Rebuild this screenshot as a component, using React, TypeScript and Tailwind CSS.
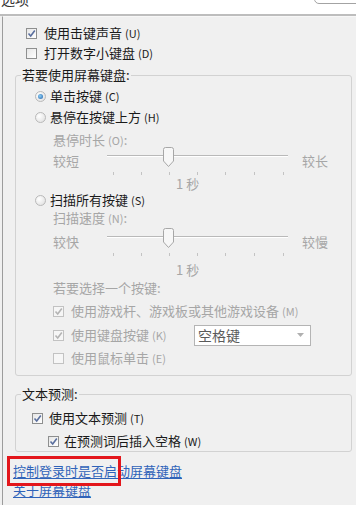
import React from "react";

const ink = "text-[#1a1a1a]";
const dim = "text-[#a6a6a6]";

function Check({ checked, disabled }: { checked?: boolean; disabled?: boolean }) {
  return (
    <span
      className={[
        "flex h-[11px] w-[11px] shrink-0 items-center justify-center border",
        disabled
          ? "border-[#c2c2c2] bg-[#f6f6f6]"
          : "border-[#8e8f8f] bg-[linear-gradient(135deg,#e6e6e6,#ffffff)]",
      ].join(" ")}
    >
      {checked && (
        <svg width="9" height="9" viewBox="0 0 9 9">
          <path
            d="M1.5 4.5 L3.7 7 L7.8 1.5"
            fill="none"
            stroke={disabled ? "#b4b4b4" : "#5a6f9e"}
            strokeWidth="1.6"
          />
        </svg>
      )}
    </span>
  );
}

function Radio({ checked }: { checked?: boolean }) {
  return (
    <span className="flex h-[11px] w-[11px] shrink-0 items-center justify-center rounded-full border border-[#b9b9b9] bg-[radial-gradient(circle_at_35%_35%,#ffffff,#dcdcdc)]">
      {checked && (
        <span className="h-[5px] w-[5px] rounded-full bg-[radial-gradient(circle_at_40%_40%,#8fd0f6,#1f5fa8)]" />
      )}
    </span>
  );
}

// Chinese caption followed by the smaller access-key hint, e.g. "(U)"
function Label({ zh, k, className = "" }: { zh: string; k?: string; className?: string }) {
  return (
    <span className={className}>
      {zh}
      {k && <span className="ml-[3px] text-[11px]">({k})</span>}
    </span>
  );
}

function Slider({ left, right, top }: { left: string; right: string; top: string }) {
  const ticks = [6, 34, 62, 90, 118, 147, 176];
  return (
    <div className={`flex h-[28px] items-start pl-[37px] ${top}`}>
      <span className={`w-[54px] pt-[6px] leading-[16px] ${dim}`}>{left}</span>
      <div className="relative h-[28px] w-[181px]">
        <div className="absolute left-0 right-0 top-[8px] h-[2px] border-t border-b border-t-[#b9b9b9] border-b-[#ffffff]" />
        {ticks.map((t) => (
          <span key={t} className="absolute top-[25px] h-[3px] w-px bg-[#c3c3c3]" style={{ left: t }} />
        ))}
        <svg className="absolute left-[56px] top-0" width="11" height="20" viewBox="0 0 11 20">
          <path
            d="M0.5 2.5 Q0.5 0.5 2.5 0.5 H8.5 Q10.5 0.5 10.5 2.5 V14 L5.5 19.5 L0.5 14 Z"
            fill="#f7f7f7"
            stroke="#a7a7a7"
          />
        </svg>
      </div>
      <span className={`ml-[14px] pt-[6px] leading-[16px] ${dim}`}>{right}</span>
    </div>
  );
}

export default function App() {
  return (
    <div className="relative flex h-[505px] w-[356px] flex-col overflow-hidden bg-[#f0f0f0] font-['Noto_Sans_CJK_SC','Noto_Sans',sans-serif] text-[13px] leading-[16px]">
      <div className="relative h-[16px] shrink-0 overflow-hidden border-b-2 border-b-[#bdbdbd] bg-white">
        <span className="-mt-[10px] block pl-[1px] text-[14px] leading-[18px] text-[#333]">选项</span>
        <div className="absolute right-[-6px] top-[-20px] h-[24px] w-[48px] rounded-[5px] border border-[#a3a3a3] bg-white" />
      </div>

      <div className="ml-[2px] flex-1 border-l border-l-[#9c9c9c] border-t border-t-[#f7f7f7]">
        <div className={`mt-[6px] flex h-[20px] items-center gap-[7px] pl-[23px] ${ink}`}>
          <Check checked />
          <Label zh="使用击键声音" k="U" />
        </div>
        <div className={`flex h-[20px] items-center gap-[7px] pl-[23px] ${ink}`}>
          <Check />
          <Label zh="打开数字小键盘" k="D" />
        </div>

        <fieldset className="ml-[12px] mr-[4px] mt-[4px] rounded-[3px] border border-[#d2d2d2] pb-[7px]">
          <legend className={`ml-[5px] px-[1px] ${ink}`}>若要使用屏幕键盘:</legend>

          <div className={`mt-[3px] flex h-[20px] items-center gap-[4px] pl-[19px] ${ink}`}>
            <Radio checked />
            <Label zh="单击按键" k="C" />
          </div>
          <div className={`mt-[1px] flex h-[20px] items-center gap-[4px] pl-[19px] ${ink}`}>
            <Radio />
            <Label zh="悬停在按键上方" k="H" />
          </div>
          <div className={`mt-[5px] h-[15px] pl-[37px] leading-[15px] ${dim}`}>
            <Label zh="悬停时长" k="O" />:
          </div>
          <Slider left="较短" right="较长" top="" />
          <div className={`mt-[2px] h-[14px] pl-[160px] leading-[14px] ${dim}`}>1 秒</div>

          <div className={`mt-[-1px] flex h-[20px] items-center gap-[4px] pl-[19px] ${ink}`}>
            <Radio />
            <Label zh="扫描所有按键" k="S" />
          </div>
          <div className={`h-[16px] pl-[37px] ${dim}`}>
            <Label zh="扫描速度" k="N" />:
          </div>
          <Slider left="较快" right="较慢" top="mt-[2px]" />
          <div className={`mt-[7px] h-[14px] pl-[160px] leading-[14px] ${dim}`}>1 秒</div>

          <div className={`mt-[3px] h-[16px] pl-[37px] ${dim}`}>若要选择一个按键:</div>
          <div className={`mt-[5px] flex h-[20px] items-center gap-[7px] pl-[37px] ${dim}`}>
            <Check checked disabled />
            <Label zh="使用游戏杆、游戏板或其他游戏设备" k="M" />
          </div>
          <div className={`mt-[2px] flex h-[24px] items-center gap-[7px] pl-[37px] ${dim}`}>
            <Check checked disabled />
            <Label zh="使用键盘按键" k="K" className="w-[116px]" />
            <div className="flex h-[21px] w-[117px] items-center justify-between border border-[#b4b4b4] bg-white pl-[3px] pr-[6px]">
              <span className="text-[14px] leading-[18px] text-[#5a5a5a]">空格键</span>
              <svg width="7" height="4" viewBox="0 0 7 4">
                <path d="M0 0 H7 L3.5 4 Z" fill="#b0b0b0" />
              </svg>
            </div>
          </div>
          <div className={`mt-[1px] flex h-[20px] items-center gap-[7px] pl-[37px] ${dim}`}>
            <Check disabled />
            <Label zh="使用鼠标单击" k="E" />
          </div>
        </fieldset>

        <fieldset className="ml-[12px] mr-[4px] mt-[10px] rounded-[3px] border border-[#d2d2d2]">
          <legend className={`ml-[5px] px-[1px] ${ink}`}>文本预测:</legend>
          <div className={`mt-[6px] flex h-[20px] items-center gap-[6px] pl-[16px] ${ink}`}>
            <Check checked />
            <Label zh="使用文本预测" k="T" />
          </div>
          <div className={`mt-[3px] flex h-[20px] items-center gap-[5px] pl-[32px] ${ink}`}>
            <Check checked />
            <Label zh="在预测词后插入空格" k="W" />
          </div>
        </fieldset>

        <div className="relative mt-[10px] flex h-[18px] items-center pl-[10px]">
          <a className="text-[#2f63b9] underline underline-offset-2">控制登录时是否启动屏幕键盘</a>
          <span className="absolute left-[4px] top-[-6px] h-[30px] w-[114px] border-[3px] border-[#e3161b]" />
        </div>
        <div className="mt-[2px] flex h-[16px] items-center pl-[10px]">
          <a className="text-[#2f63b9] underline underline-offset-2">关于屏幕键盘</a>
        </div>
      </div>
    </div>
  );
}
